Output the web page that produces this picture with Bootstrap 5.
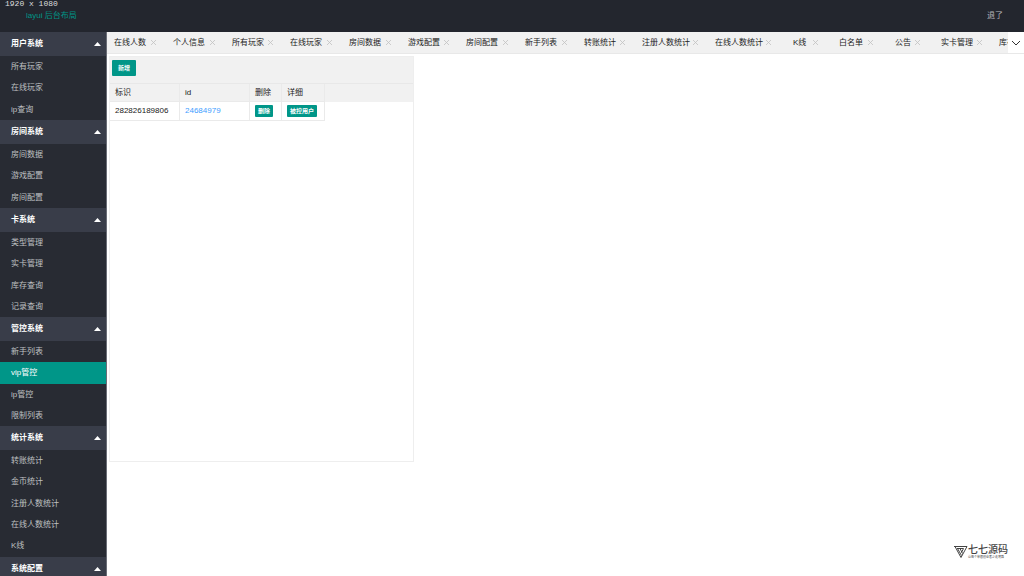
<!DOCTYPE html>
<html lang="zh-CN">
<head>
<meta charset="utf-8">
<meta name="viewport" content="width=device-width, initial-scale=1">
<title>layui 后台布局</title>
<link href="https://cdn.jsdelivr.net/npm/bootstrap@5.3.0/dist/css/bootstrap.min.css" rel="stylesheet">
<style>
  :root { --teal: #009688; --dark: #23262e; --group: #393d49; --items: #282b33; --grey: #f1f1f1; }
  body { font: 8px/12px "Liberation Sans", "Noto Sans CJK SC", sans-serif; color: #222; background: #fff; }
  a { text-decoration: none; }
  .top-bar { height: 32px; background: var(--dark); }
  .screen-size { font-family: "Liberation Mono", "Noto Sans CJK SC", monospace; line-height: 8px; color: #ddd; padding-left: 5px; }
  .brand-name { color: var(--teal); line-height: 16px; padding-left: 26px; }
  .logout { color: #b4b6ba; padding-right: 21px; }
  .side-menu { width: 107px; background: var(--items); border-right: 1px solid #6a6d76; }
  .group-head { height: 24px; background: var(--group); color: #fff; font: inherit; font-weight: 600; padding: 0 5px 0 11px; }
  .side-link { height: 21px; color: #bfc0c2; padding-left: 11px; }
  .side-list li:nth-child(3n+2) .side-link { height: 22px; }
  .side-link.active { background: var(--teal); color: #fff; }
  .tab-strip { height: 22px; background: var(--grey); border-bottom: 1px solid #e8e8e8; }
  .page-tab { width: 59px; padding: 0 10px 0 7px; white-space: nowrap; }
  .page-tab:nth-child(3n) { width: 58px; }
  .page-tab.tab-long { width: 73px; }
  .page-tab.tab-short { width: 51px; padding: 0 14px 0 12px; }
  .page-tab.tab-mid { width: 51px; }
  .page-tab a { color: #222; }
  .plain { border: 0; background: none; padding: 0; line-height: 0; }
  .more-tabs { width: 16px; background: #fff; }
  .data-panel { width: 305px; min-height: 406px; margin: 2px 0 0 2px; border: 1px solid #eee; }
  .tool-row { height: 26px; background: var(--grey); padding: 3px 2px; }
  .btn-teal { --bs-btn-color: #fff; --bs-btn-bg: var(--teal); --bs-btn-hover-color: #fff; --bs-btn-hover-bg: #33ab9f; --bs-btn-border-width: 0; --bs-btn-border-radius: 1px; --bs-btn-padding-y: 0; --bs-btn-padding-x: 3px; --bs-btn-font-size: 6px; --bs-btn-font-weight: 700; --bs-btn-line-height: 12px; display: block; white-space: nowrap; }
  .btn-add { --bs-btn-line-height: 16px; --bs-btn-padding-x: 6px; }
  .grid-table { width: 215px; table-layout: fixed; --bs-table-bg: transparent; border-collapse: separate; border-spacing: 0; }
  .grid-table th, .grid-table td { height: 19px; padding: 0 4px 0 5px; border: 0 solid #eaeaea; border-width: 0 1px 1px 0; font-weight: 400; vertical-align: middle; color: #222; }
  .grid-table th { height: 18px; }
  .grid-table td a { color: #409eff; }
  .head-fill { background: linear-gradient(var(--grey) 18px, #fff 18px); border-top: 1px solid #e8e8e8; }
  .site-mark { right: 16px; bottom: 17px; color: #444; }
  .mark-title { font-size: 10px; line-height: 11px; font-weight: 500; }
  .mark-sub { font-size: 3px; line-height: 4px; }
</style>
</head>
<body>
<div class="d-flex flex-column vh-100 overflow-hidden position-relative">
  <header class="top-bar d-flex justify-content-between align-items-center flex-shrink-0">
    <div class="align-self-start">
      <div class="screen-size">1920 x 1080</div>
      <div class="brand-name">layui 后台布局</div>
    </div>
    <a class="logout" href="#">退了</a>
  </header>
  <div class="d-flex flex-grow-1 overflow-hidden">
    <nav class="side-menu flex-shrink-0" id="menu" aria-label="菜单"></nav>
    <main class="flex-grow-1 overflow-hidden">
      <div class="tab-strip d-flex">
        <div class="d-flex flex-grow-1 overflow-hidden" id="tabs"></div>
        <button class="plain more-tabs flex-shrink-0" type="button" aria-label="更多">
          <svg width="10" height="6" viewBox="0 0 10 6" fill="none" stroke="#333"><path d="M1 1l4 4 4-4"/></svg>
        </button>
      </div>
      <section class="data-panel">
        <div class="tool-row"><button class="btn btn-teal btn-add" type="button">新增</button></div>
        <div class="head-fill">
          <table class="table grid-table mb-0">
            <colgroup><col style="width:70px"><col style="width:70px"><col style="width:32px"><col style="width:43px"></colgroup>
            <thead><tr><th>标识</th><th>id</th><th>删除</th><th>详细</th></tr></thead>
            <tbody><tr>
              <td>282826189806</td>
              <td><a href="#">24684979</a></td>
              <td><button class="btn btn-teal" type="button">删除</button></td>
              <td><button class="btn btn-teal" type="button">被控用户</button></td>
            </tr></tbody>
          </table>
        </div>
      </section>
    </main>
  </div>
  <div class="site-mark position-absolute d-flex align-items-center">
    <svg width="14" height="14" viewBox="0 0 14 14" fill="none" stroke="#444"><path d="M0 1.500h13M1 1.500l6 11M3.500 3.500l4 7M6 3.500l2.500 5M13 1.500l-6 11M3 3.500h6.500l-2 4"/></svg>
    <div><div class="mark-title">七七源码</div><div class="mark-sub">让每个草根创业者少走弯路</div></div>
  </div>
</div>
<script src="https://cdn.jsdelivr.net/npm/bootstrap@5.3.0/dist/js/bootstrap.bundle.min.js"></script>
<script>
  const groups = [
    ['用户系统', ['所有玩家', '在线玩家', 'ip查询']],
    ['房间系统', ['房间数据', '游戏配置', '房间配置']],
    ['卡系统', ['类型管理', '实卡管理', '库存查询', '记录查询']],
    ['管控系统', ['新手列表', 'vip管控', 'ip管控', '限制列表']],
    ['统计系统', ['转账统计', '金币统计', '注册人数统计', '在线人数统计', 'K线']],
    ['系统配置', []]
  ];
  document.getElementById('menu').innerHTML = groups.map(([name, items]) => `
    <button type="button" class="group-head border-0 w-100 d-flex align-items-center justify-content-between">${name}
      <svg width="7" height="4" viewBox="0 0 7 4" fill="#fff"><path d="M0 4l3.500-4L7 4z"/></svg></button>
    <ul class="side-list list-unstyled mb-0">${items.map(t =>
      `<li><a href="#" class="side-link d-flex align-items-center${t === 'vip管控' ? ' active' : ''}">${t}</a></li>`).join('')}</ul>`).join('');

  const tabs = ['在线人数', '个人信息', '所有玩家', '在线玩家', '房间数据', '游戏配置', '房间配置', '新手列表', '转账统计',
    '注册人数统计', '在线人数统计', 'K线', '白名单', '公告', '实卡管理', '库存查询'];
  const size = t => t.length > 4 ? ' tab-long' : t.length === 3 ? ' tab-mid' : t.length === 2 ? ' tab-short' : '';
  document.getElementById('tabs').innerHTML = tabs.map(t => `
    <div class="page-tab flex-shrink-0 d-flex align-items-center justify-content-between${size(t)}"><a href="#">${t}</a>
      <button type="button" class="plain" aria-label="关闭"><svg width="5" height="5" viewBox="0 0 5 5" stroke="#c2c2c2" stroke-width=".8"><path d="M0 0l5 5M5 0L0 5"/></svg></button></div>`).join('');
</script>
</body>
</html>
